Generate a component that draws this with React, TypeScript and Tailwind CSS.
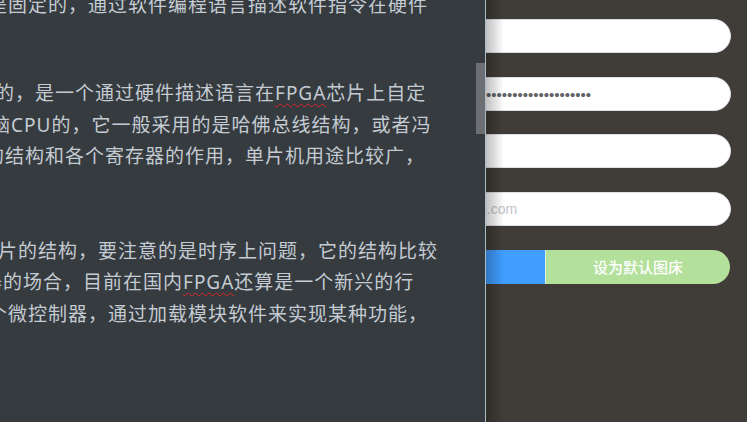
import React from "react";

/* ── editor text (clipped on the left, as in the screenshot) ───────────── */
const FONT = { fontFamily: '"Noto Sans", "Noto Sans CJK SC", sans-serif' };

function Fpga() {
  return (
    <span className="underline decoration-wavy decoration-[#e02424] decoration-1 underline-offset-[3px]">
      FPGA
    </span>
  );
}

function Line({ offset, children }: { offset: string; children: React.ReactNode }) {
  return <div className={`h-[31.5px] whitespace-nowrap leading-[31.5px] ${offset}`}>{children}</div>;
}

function Editor() {
  return (
    <div className="flex-1 overflow-hidden">
      <div className="mt-[-10px] text-[19px] tracking-[1px] text-[#c4cbd2]" style={FONT}>
        <Line offset="ml-[-12px]">是固定的，通过软件编程语言描述软件指令在硬件</Line>
        <div className="h-[56.5px]" />
        <Line offset="ml-[-5px]">
          的，是一个通过硬件描述语言在<Fpga />芯片上自定
        </Line>
        <Line offset="ml-[-9px]">脑CPU的，它一般采用的是哈佛总线结构，或者冯</Line>
        <Line offset="ml-[-15px]">的结构和各个寄存器的作用，单片机用途比较广，</Line>
        <div className="h-[63px]" />
        <Line offset="ml-[-2px]">片的结构，要注意的是时序上问题，它的结构比较</Line>
        <Line offset="ml-[-17px]">
          器的场合，目前在国内<Fpga />还算是一个新兴的行
        </Line>
        <Line offset="ml-[-12px]">个微控制器，通过加载模块软件来实现某种功能，</Line>
      </div>
    </div>
  );
}

/* ── settings form on the right ────────────────────────────────────────── */
function Field({ className = "", children }: { className?: string; children?: React.ReactNode }) {
  return (
    <div
      className={`ml-[-100px] mr-[16px] flex h-[34px] items-center rounded-full border border-[#dcdfe6] bg-white ${className}`}
    >
      {children}
    </div>
  );
}

function Settings() {
  return (
    <div className="relative flex-1 overflow-hidden bg-[#403c37]" style={{ fontFamily: '"Liberation Sans", "Noto Sans CJK SC", sans-serif' }}>
      <div className="flex flex-col pt-[19px]">
        <Field />
        <Field className="mt-[24px] pl-[78px]">
          <span className="text-[15px] leading-none text-[#606266]">••••••••••••••••••••••••</span>
        </Field>
        <Field className="mt-[23px]" />
        <Field className="mt-[24px] pl-[70px]">
          <span className="text-[14px] text-[#c0c4cc]">@qq.com</span>
        </Field>
        <div className="ml-[-100px] mr-[17px] mt-[24px] flex h-[34px] overflow-hidden rounded-r-full">
          <div className="flex-1 bg-[#409eff]" />
          <div className="w-px bg-[#dff3d2]" />
          <div
            className="flex w-[184px] items-center justify-center bg-[#b3e09b] text-[15px] font-medium text-white"
            style={{ fontFamily: '"Noto Sans CJK SC", sans-serif' }}
          >
            设为默认图床
          </div>
        </div>
      </div>
      {/* drawer shadow */}
      <div className="absolute inset-y-0 left-0 w-[18px] bg-linear-to-r from-black/25 to-transparent" />
    </div>
  );
}

export default function App() {
  return (
    <div className="flex h-[422px] w-[747px] overflow-hidden">
      <div className="flex h-full w-[486px] bg-[#363b40]">
        <Editor />
        <div className="w-[9px]">
          <div className="mt-[63px] h-[71px] bg-[#6c7075]" />
        </div>
        <div className="w-px bg-[#a9bcc8]" />
      </div>
      <Settings />
    </div>
  );
}
